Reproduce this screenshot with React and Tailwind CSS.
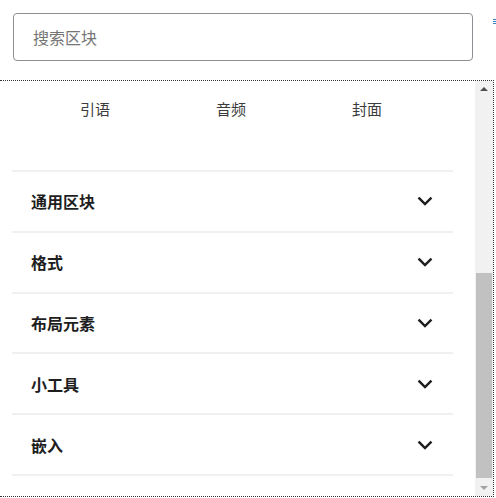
import React from 'react';

const ChevronDown = () => (
  <svg width="18" height="18" viewBox="0 0 24 24" fill="none" stroke="#1e1e1e" strokeWidth="3.2" strokeLinecap="square">
    <path d="M4.5 8.5l7.5 7.5 7.5-7.5" />
  </svg>
);

const groups = ['通用区块', '格式', '布局元素', '小工具', '嵌入'];
const blocks = ['引语', '音频', '封面'];

export default function App() {
  return (
    <div className="relative w-[496px] h-[498px] bg-white overflow-hidden" style={{ fontFamily: '"Noto Sans CJK SC", "Noto Sans", sans-serif' }}>
      <div className="absolute right-0 top-[19px] w-[3px] h-[6px] flex flex-col gap-[1px]">
        <div className="h-[1px] bg-[#3582c4]" />
        <div className="h-[1px] bg-[#3582c4]" />
        <div className="h-[1px] bg-[#3582c4]" />
      </div>

      <div className="pt-[13px] pl-[13px] pr-[23px] pb-[19px]">
        <div className="h-[48px] border border-[#8c8f94] rounded-[4px] flex items-center px-[19px] text-[16px] text-[#757575]">
          搜索区块
        </div>
      </div>

      <div className="h-[417px] mr-[2px] border-t border-r border-b border-dotted border-[#333] flex">
        <div className="flex-1 pl-[12px] pr-[22px]">
          <div className="grid grid-cols-3 pl-[15px] pr-[18px] pt-[18px] h-[89px]">
            {blocks.map((b) => (
              <div key={b} className="text-center text-[15px] text-[#3c3c3c] leading-[20px]">{b}</div>
            ))}
          </div>
          <div className="border-t-2 border-[#f0f0f0]">
            {groups.map((g) => (
              <div key={g} className="h-[60.8px] border-b-2 border-[#f0f0f0] flex items-center justify-between pl-[19px] pr-[19px]">
                <span className="text-[16px] font-bold text-[#1e1e1e]">{g}</span>
                <ChevronDown />
              </div>
            ))}
          </div>
        </div>

        <div className="w-[18px] bg-[#f1f1f1] flex flex-col">
          <div className="h-[16px] flex items-center justify-center">
            <div className="w-0 h-0 border-l-[4px] border-r-[4px] border-b-[4px] border-l-transparent border-r-transparent border-b-[#505050]" />
          </div>
          <div className="flex-1 flex flex-col pt-[176px] pb-[2px] px-[1px]">
            <div className="flex-1 bg-[#c1c1c1]" />
          </div>
          <div className="h-[16px] flex items-center justify-center">
            <div className="w-0 h-0 border-l-[4px] border-r-[4px] border-t-[4px] border-l-transparent border-r-transparent border-t-[#a3a3a3]" />
          </div>
        </div>
      </div>
    </div>
  );
}
